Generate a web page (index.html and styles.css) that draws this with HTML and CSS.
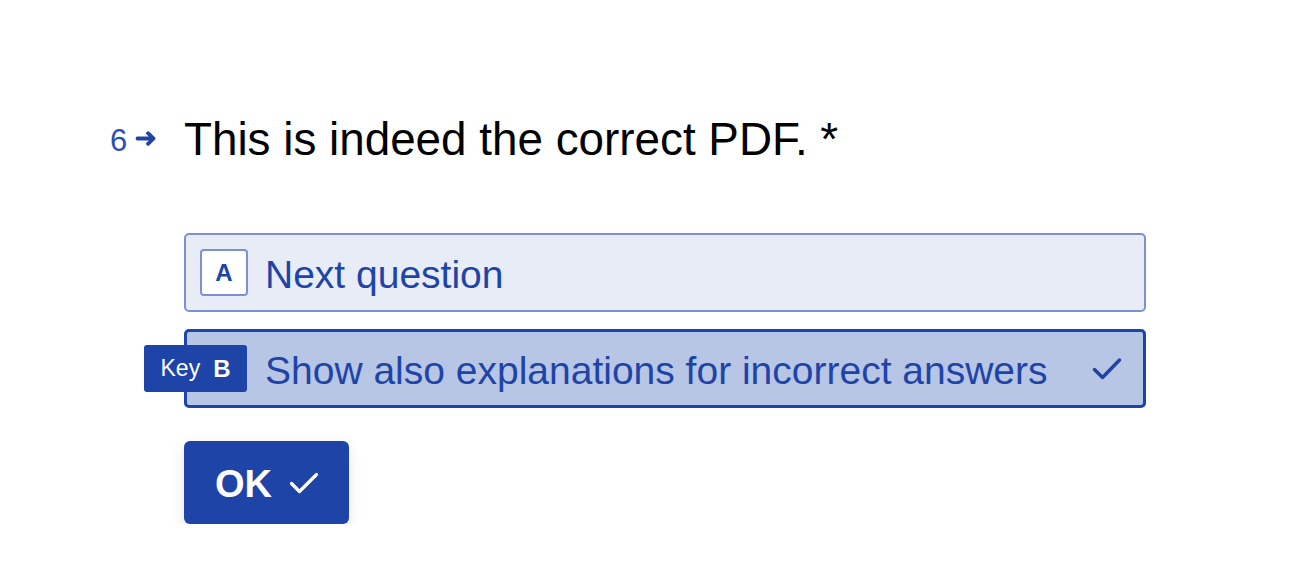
FILE: index.html
```html
<!DOCTYPE html>
<html lang="en">
<head>
<meta charset="utf-8">
<title>Question 6</title>
<link rel="stylesheet" href="styles.css">
</head>
<body>
<main class="page">
  <div class="question">
    <div class="qnum">
      <span class="num">6</span>
      <svg class="arrow" width="22" height="15" viewBox="0 0 22 15" aria-hidden="true"><path d="M2.5 7.5h16M13 2.2l5.5 5.3-5.5 5.3" fill="none" stroke="currentColor" stroke-width="3.8" stroke-linecap="round" stroke-linejoin="round"/></svg>
    </div>
    <h1 class="qtext">This is indeed the correct PDF. *</h1>
  </div>

  <div class="options">
    <div class="option">
      <span class="key"><span class="key-letter">A</span></span>
      <span class="label">Next question</span>
    </div>
    <div class="option option-selected">
      <span class="key key-hidden">
        <span class="tooltip"><span class="tip-word">Key</span><span class="tip-letter">B</span></span>
      </span>
      <span class="label">Show also explanations for incorrect answers</span>
      <svg class="check" width="30" height="23" viewBox="0 0 30 23" aria-hidden="true"><path d="M2.5 12.5l8 8L27.5 3" fill="none" stroke="currentColor" stroke-width="3.5" stroke-linecap="round" stroke-linejoin="round"/></svg>
    </div>
  </div>

  <button class="ok" type="button">
    <span>OK</span>
    <svg class="ok-check" width="30" height="22" viewBox="0 0 30 22" aria-hidden="true"><path d="M2.5 11.5l8 8L27.5 2.5" fill="none" stroke="currentColor" stroke-width="3.2" stroke-linecap="round" stroke-linejoin="round"/></svg>
  </button>
</main>
</body>
</html>
```

FILE: styles.css
```css
html, body {
  margin: 0;
  padding: 0;
  background: #ffffff;
}

body {
  font-family: "Liberation Sans", Arial, sans-serif;
  color: #000;
}

.page {
  padding: 114px 0 0 184px;
  width: 962px;
}

.question {
  display: flex;
  align-items: center;
  margin-left: -74px;
}

.qnum {
  width: 74px;
  display: flex;
  align-items: center;
  color: #1e44a8;
  flex-shrink: 0;
}

.num {
  font-size: 31px;
  line-height: 1;
  color: #2b4fae;
  margin-right: 8px;
}

.arrow {
  display: block;
  margin-top: -3px;
}

.qtext {
  margin: 0;
  font-size: 45.8px;
  line-height: 52px;
  font-weight: 400;
  color: #000;
}

.options {
  margin-top: 67px;
  display: flex;
  flex-direction: column;
  gap: 17px;
}

.option {
  position: relative;
  box-sizing: border-box;
  height: 79px;
  display: flex;
  align-items: center;
  padding: 0 22px 0 14px;
  border: 2px solid #7d90d2;
  border-radius: 5px;
  background: #e8ecf6;
  color: #1e44a8;
}

.option-selected {
  border: 3px solid #1e44a8;
  padding-left: 13px;
  padding-right: 21px;
  background: #b8c6e6;
}

.key {
  position: relative;
  box-sizing: border-box;
  width: 48px;
  height: 47px;
  flex-shrink: 0;
  display: flex;
  align-items: center;
  justify-content: center;
  background: #fff;
  border: 2px solid #7d90d2;
  border-radius: 4px;
}

.key-hidden {
  background: transparent;
  border-color: transparent;
}

.key-letter {
  font-size: 24px;
  font-weight: 700;
  color: #1e44a8;
}

.tooltip {
  position: absolute;
  top: -2px;
  right: -1px;
  width: 103px;
  height: 47px;
  box-sizing: border-box;
  display: flex;
  align-items: center;
  justify-content: center;
  gap: 13px;
  background: #1e44a8;
  border-radius: 3px;
  color: #fff;
}

.tip-word {
  font-size: 23px;
}

.tip-letter {
  font-size: 24px;
  font-weight: 700;
}

.label {
  margin-left: 17px;
  padding-top: 3px;
  font-size: 39px;
  line-height: 1;
  flex: 1;
  white-space: nowrap;
}

.check {
  display: block;
  color: #1e44a8;
  flex-shrink: 0;
}

.ok {
  margin-top: 33px;
  box-sizing: border-box;
  width: 165px;
  height: 83px;
  display: flex;
  align-items: center;
  justify-content: center;
  gap: 17px;
  padding: 4px 0 0 1px;
  border: none;
  border-radius: 6px;
  background: #1e44a8;
  color: #fff;
  font-family: "Liberation Sans", Arial, sans-serif;
  font-size: 38px;
  font-weight: 700;
  box-shadow: 0 4px 14px rgba(0, 0, 0, 0.10);
  cursor: pointer;
}

.ok-check {
  display: block;
  margin-top: -4px;
}
```
